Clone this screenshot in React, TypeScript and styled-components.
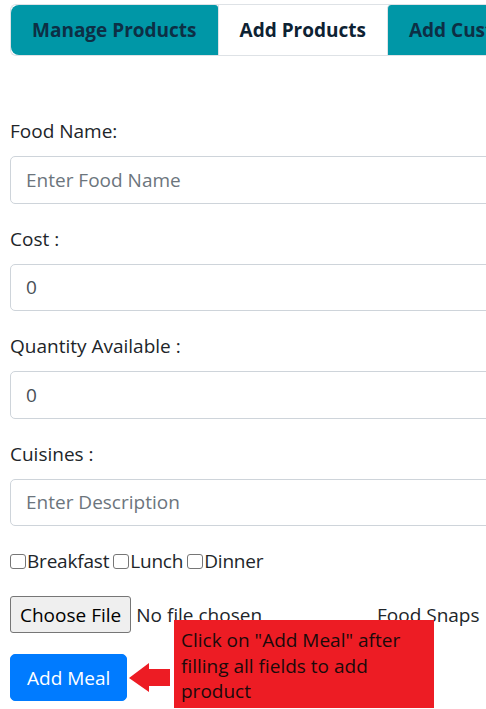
import React from "react";
import styled, { createGlobalStyle } from "styled-components";

const GlobalStyle = createGlobalStyle`
  html, body {
    margin: 0;
    padding: 0;
    overflow: hidden;
    background: #ffffff;
  }
  body {
    font-family: "Open Sans", "Noto Sans", sans-serif;
    font-size: 19px;
    line-height: 30px;
    color: #212529;
  }
  * { box-sizing: border-box; }
`;

const Page = styled.div`
  position: relative;
  width: 486px;
  height: 709px;
  padding: 4px 0 0 10px;
  overflow: hidden;
`;

const Nav = styled.nav`
  display: flex;
  width: 560px;
  border-top: 1px solid #dee2e6;
  border-left: 1px solid #dee2e6;
  border-bottom: 1px solid #dee2e6;
  border-radius: 6px 0 0 6px;
`;

const Tab = styled.button<{ $active?: boolean; $first?: boolean }>`
  display: flex;
  align-items: center;
  height: 50px;
  padding: 0 21px;
  border: none;
  border-left: ${(p) => (p.$first ? "none" : "1px solid #dee2e6")};
  background: ${(p) => (p.$active ? "#ffffff" : "#0097a7")};
  border-radius: ${(p) => (p.$first ? "8px 3px 0 8px" : p.$active ? "0" : "4px 0 0 0")};
  font-family: inherit;
  font-size: 19px;
  font-weight: 700;
  color: ${(p) => (p.$active ? "#0d2233" : "#0d2f45")};
  white-space: nowrap;
  cursor: pointer;
`;

const Form = styled.form`
  width: 540px;
  margin-top: 60px;
`;

const Group = styled.div`
  margin-bottom: 20px;
`;

const Label = styled.label`
  display: block;
  margin-bottom: 10px;
  line-height: 30px;
  color: #212529;
`;

const Input = styled.input`
  display: block;
  width: 100%;
  height: 47.5px;
  padding: 7.5px 15px;
  border: 1px solid #ced4da;
  border-radius: 5px;
  font-family: inherit;
  font-size: 19px;
  color: #495057;
  background: #fff;
  &::placeholder {
    color: #6c757d;
  }
`;

const CheckRow = styled.div`
  display: flex;
  align-items: center;
  gap: 4px;
  height: 30px;
  margin-bottom: 20px;
`;

const CheckLabel = styled.label`
  display: inline-flex;
  align-items: center;
  color: #212529;
  letter-spacing: -0.2px;
`;

const Check = styled.input`
  appearance: none;
  width: 16px;
  height: 15px;
  margin: 0 1px 0 0;
  border: 1px solid #767676;
  border-radius: 3px;
  background: #fff;
`;

const FileRow = styled.div`
  display: flex;
  align-items: center;
  height: 37px;
`;

const FileInput = styled.input`
  width: 367px;
  font-family: inherit;
  font-size: 19px;
  color: #212529;
  &::file-selector-button {
    height: 37px;
    margin-right: 5px;
    padding: 0 9px;
    border: 1px solid #767676;
    border-radius: 3px;
    background: #efefef;
    font-family: inherit;
    font-size: 19px;
    color: #000;
  }
`;

const FileCaption = styled.span`
  color: #212529;
`;

const SubmitButton = styled.button`
  display: block;
  margin-top: 21px;
  height: 47px;
  padding: 0 16px;
  border: 1px solid #007bff;
  border-radius: 5px;
  background: #007bff;
  color: #ffffff;
  font-family: inherit;
  font-size: 19px;
  cursor: pointer;
`;

const Callout = styled.div`
  position: absolute;
  left: 174px;
  top: 620px;
  width: 260px;
  height: 88px;
  padding: 8px 12px 0 7px;
  background: #ed1c24;
  color: #1a0a0a;
  font-size: 19px;
  line-height: 25.5px;
  z-index: 2;
`;

const Arrow = styled.svg`
  position: absolute;
  left: 129px;
  top: 662px;
  width: 41px;
  height: 31px;
  z-index: 2;
`;

const fields = [
  { label: "Food Name:", placeholder: "Enter Food Name", type: "text" },
  { label: "Cost :", value: "0", type: "number" },
  { label: "Quantity Available :", value: "0", type: "number" },
  { label: "Cuisines :", placeholder: "Enter Description", type: "text" },
];

export default function App() {
  return (
    <>
      <GlobalStyle />
      <Page>
        <Nav>
          <Tab $first>Manage Products</Tab>
          <Tab $active>Add Products</Tab>
          <Tab>Add Customers</Tab>
        </Nav>
        <Form onSubmit={(e) => e.preventDefault()}>
          {fields.map((f) => (
            <Group key={f.label}>
              <Label>{f.label}</Label>
              <Input
                type={f.type}
                placeholder={f.placeholder}
                defaultValue={f.value}
              />
            </Group>
          ))}
          <CheckRow>
            <CheckLabel>
              <Check type="checkbox" />
              Breakfast
            </CheckLabel>
            <CheckLabel>
              <Check type="checkbox" />
              Lunch
            </CheckLabel>
            <CheckLabel>
              <Check type="checkbox" />
              Dinner
            </CheckLabel>
          </CheckRow>
          <FileRow>
            <FileInput type="file" />
            <FileCaption>Food Snaps</FileCaption>
          </FileRow>
          <SubmitButton type="submit">Add Meal</SubmitButton>
        </Form>
        <Arrow viewBox="0 0 41 31">
          <polygon
            points="0,16 20,1 20,7 41,7 41,24 20,24 20,30"
            fill="#ed1c24"
          />
        </Arrow>
        <Callout>Click on "Add Meal" after filling all fields to add product</Callout>
      </Page>
    </>
  );
}
